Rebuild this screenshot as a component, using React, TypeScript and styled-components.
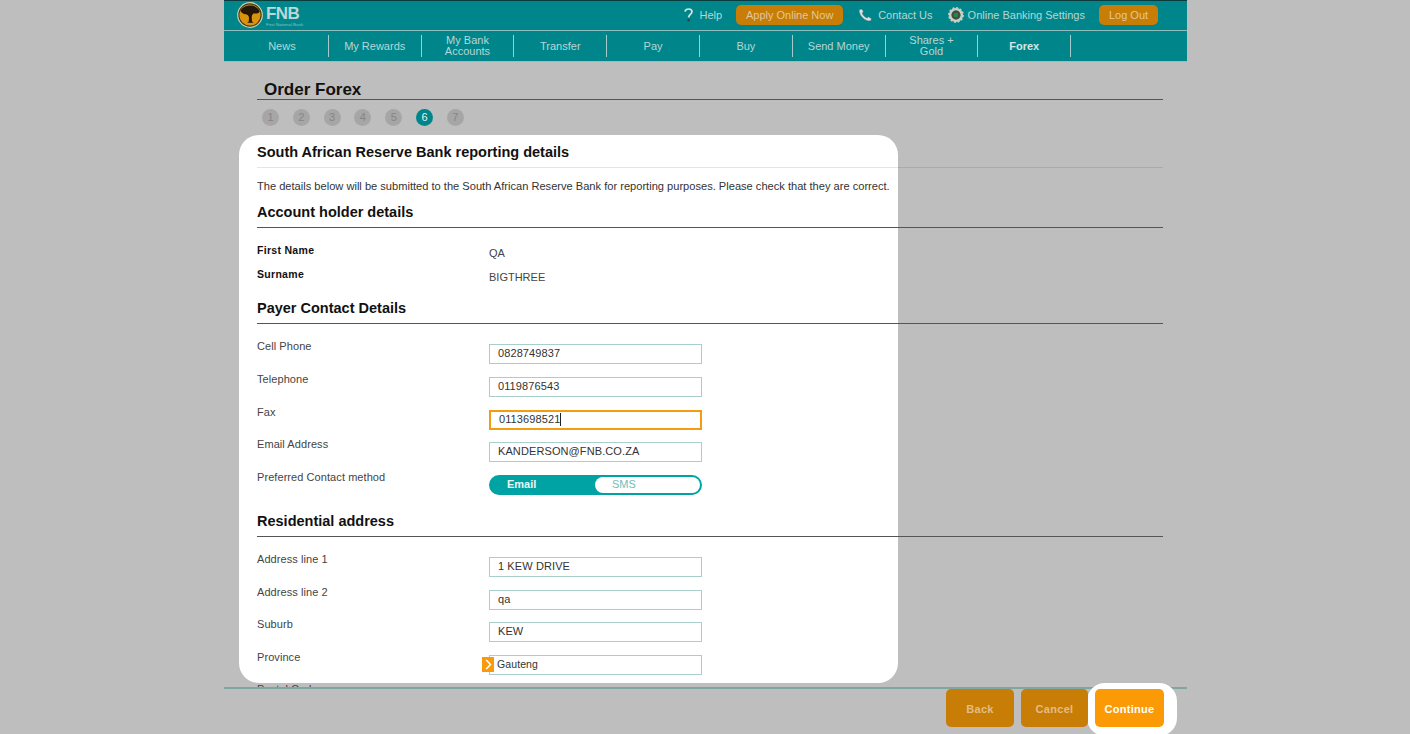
import React from 'react';
import styled, { createGlobalStyle } from 'styled-components';

const GlobalStyle = createGlobalStyle`
  html, body {
    margin: 0;
    padding: 0;
    height: 100%;
    background: #bebebe;
    font-family: "Liberation Sans", Arial, sans-serif;
    overflow: hidden;
  }
`;

const Page = styled.div`
  width: 963px;
  height: 734px;
  margin-left: 224px;
  display: flex;
  flex-direction: column;
  overflow: hidden;
`;

const TopBar = styled.div`
  height: 28px;
  flex: none;
  background: #00868a;
  border-top: 1px solid #0b3a3c;
  border-bottom: 1px solid #8ebdbd;
  display: flex;
  align-items: center;
  padding: 0 29px 1px 13px;
  color: #b6d6d6;
  font-size: 11px;
`;

const Logo = styled.div`
  display: flex;
  align-items: center;
  gap: 3px;
`;

const LogoText = styled.div`
  display: flex;
  flex-direction: column;
  margin-top: 3px;
`;

const LogoWord = styled.div`
  color: #b9d8d8;
  font-size: 17px;
  font-weight: bold;
  letter-spacing: -0.6px;
  line-height: 16px;
`;

const LogoTag = styled.div`
  color: #8fc2c2;
  font-size: 4.4px;
  line-height: 5px;
  white-space: nowrap;
`;

const TopLinks = styled.div`
  margin-left: auto;
  display: flex;
  align-items: center;
`;

const TopLink = styled.span<{ $gap?: number; $iconGap?: number }>`
  display: flex;
  align-items: center;
  gap: ${(p) => p.$iconGap ?? 5}px;
  margin-left: ${(p) => p.$gap ?? 0}px;
`;

const OrangeButton = styled.span<{ $gap: number; $width: number }>`
  margin-left: ${(p) => p.$gap}px;
  width: ${(p) => p.$width}px;
  height: 20px;
  border-radius: 5px;
  background: #c77d06;
  color: #e3c79a;
  display: flex;
  align-items: center;
  justify-content: center;
`;

const NavBar = styled.div`
  height: 30px;
  flex: none;
  background: #00868a;
  display: flex;
  align-items: center;
  padding-left: 12px;
  border-bottom: 1px solid #aab4b4;
`;

const NavItem = styled.div<{ $active?: boolean }>`
  width: 92.8px;
  height: 22px;
  flex: none;
  padding: 0 12px;
  display: flex;
  align-items: center;
  justify-content: center;
  text-align: center;
  line-height: 11px;
  font-size: 11px;
  color: ${(p) => (p.$active ? '#d5e6e6' : '#b6d6d6')};
  font-weight: ${(p) => (p.$active ? 'bold' : 'normal')};
  border-right: 1px solid #a5cccc;
  box-sizing: border-box;
`;

const Content = styled.div`
  position: relative;
  flex: 1;
  min-height: 0;
  overflow: hidden;
  padding: 0 24px 0 33px;
`;

// white spotlight of the tutorial overlay, sits behind the form
const Spotlight = styled.div`
  position: absolute;
  left: 15px;
  top: 73px;
  width: 659px;
  height: 548px;
  background: #fff;
  border-radius: 20px;
`;

const Form = styled.div`
  position: relative;
`;

const PageTitle = styled.h1`
  margin: 17px 0 0;
  padding: 0 0 0 7px;
  height: 20px;
  line-height: 22px;
  font-size: 17px;
  font-weight: bold;
  color: #111;
  border-bottom: 1px solid #555;
`;

const Steps = styled.div`
  display: flex;
  gap: 13.8px;
  margin: 9px 0 0 5px;
`;

const Step = styled.div<{ $active?: boolean }>`
  width: 17px;
  height: 17px;
  border-radius: 50%;
  background: ${(p) => (p.$active ? '#00868a' : '#a6a6a6')};
  color: ${(p) => (p.$active ? '#e4f0f0' : '#858585')};
  font-size: 11px;
  line-height: 17px;
  text-align: center;
`;

const PanelTitle = styled.h2`
  margin: 17px 0 0;
  height: 24px;
  line-height: 18px;
  font-size: 14.5px;
  font-weight: bold;
  color: #111;
  border-bottom: 1px solid rgba(0, 0, 0, 0.1);
`;

const Intro = styled.p`
  margin: 12px 0 0;
  height: 13px;
  line-height: 13px;
  font-size: 11.1px;
  color: #333;
  white-space: nowrap;
`;

const SectionTitle = styled.h3<{ $top: number }>`
  margin: ${(p) => p.$top}px 0 0;
  height: 24px;
  line-height: 18px;
  font-size: 14.5px;
  font-weight: bold;
  color: #111;
  border-bottom: 1px solid #555;
`;

const Rows = styled.div<{ $top: number; $gap: number }>`
  margin-top: ${(p) => p.$top}px;
  display: grid;
  grid-template-columns: 232px 213px;
  row-gap: ${(p) => p.$gap}px;
`;

const Label = styled.div<{ $bold?: boolean }>`
  font-size: ${(p) => (p.$bold ? 10.5 : 11)}px;
  line-height: 13px;
  color: ${(p) => (p.$bold ? '#111' : '#444')};
  font-weight: ${(p) => (p.$bold ? 'bold' : 'normal')};
  letter-spacing: ${(p) => (p.$bold ? '0.3px' : '0.07px')};
  margin-top: -4px;
`;

const Value = styled.div`
  font-size: 11px;
  line-height: 13px;
  color: #444;
  height: 12px;
  margin-top: -1px;
`;

const Field = styled.div<{ $focused?: boolean }>`
  box-sizing: border-box;
  height: 20px;
  position: relative;
  border: ${(p) => (p.$focused ? '2px solid #f39c12' : '1px solid #a9cfcb')};
  padding-left: 8px;
  font-size: 11px;
  line-height: ${(p) => (p.$focused ? '15px' : '17px')};
  color: #333;
  letter-spacing: 0.1px;
  background: #fff;
`;

const Caret = styled.span`
  display: inline-block;
  width: 1px;
  height: 13px;
  background: #222;
  vertical-align: -3px;
`;

const SelectField = styled(Field)`
  padding-left: 7px;
  font-size: 10.5px;
`;

const SelectArrow = styled.span`
  position: absolute;
  left: -8px;
  top: 1px;
  width: 12px;
  height: 15px;
  background: #f89a0c;
  display: flex;
  align-items: center;
  justify-content: center;
`;

const Toggle = styled.div`
  box-sizing: border-box;
  height: 20px;
  border: 2px solid #00a3a4;
  border-radius: 10px;
  background: #00a3a4;
  display: flex;
  font-size: 11px;
  line-height: 15px;
`;

const ToggleOn = styled.div`
  width: 104px;
  color: #e8f6f6;
  font-weight: bold;
  padding-left: 16px;
  box-sizing: border-box;
`;

const ToggleOff = styled.div`
  flex: 1;
  background: #fff;
  border-radius: 8px;
  color: #6fbdbd;
  padding-left: 17px;
`;

const Footer = styled.div`
  position: relative;
  height: 47px;
  flex: none;
  box-sizing: border-box;
  border-top: 2px solid #7ea79f;
  display: flex;
  justify-content: flex-end;
  gap: 7px;
  padding: 0 23px 0 0;
`;

const Halo = styled.div`
  position: absolute;
  left: 863px;
  top: -6px;
  width: 90px;
  height: 53px;
  background: #fff;
  border-radius: 18px;
`;

const FooterButton = styled.div<{ $width: number; $primary?: boolean }>`
  position: relative;
  width: ${(p) => p.$width}px;
  height: 38px;
  box-sizing: border-box;
  padding-top: 2px;
  border-radius: 5px;
  background: ${(p) => (p.$primary ? '#fb9a05' : '#c77d06')};
  color: ${(p) => (p.$primary ? '#fff' : '#e3bd83')};
  font-size: 11px;
  font-weight: bold;
  letter-spacing: 0.3px;
  display: flex;
  align-items: center;
  justify-content: center;
`;

const TreeLogo = () => (
  <svg width="26" height="26" viewBox="0 0 26 26">
    <circle cx="13" cy="13" r="12.3" fill="#4a3413" stroke="#c4d2b4" strokeWidth="1.2" />
    <circle cx="13" cy="13" r="10.6" fill="#d8930f" />
    <path d="M3.4 8.8C5.5 5 9 3.6 13 3.6C17 3.6 20.6 5 22.8 9.4C21.6 11.6 18.8 11.8 16.4 11.4C15.4 12.4 14.9 13.4 14.7 15.2L15 19.4L16.6 20.8H10.2L11.8 19.4L12 15.6C11.6 13.6 10.6 12.6 9 12.2C7 12.4 4.6 11 3.4 8.8Z" fill="#241708" />
  </svg>
);

const HelpIcon = () => (
  <svg width="9" height="14" viewBox="0 0 9 14">
    <path d="M1 3.6C1.4 1.8 3 1 4.6 1C6.6 1 8 2.2 8 3.8C8 6 5 6.2 4.6 9.4" fill="none" stroke="#d5e4e4" strokeWidth="1.7" />
    <circle cx="4.6" cy="12.2" r="1.2" fill="#3b3b3b" />
  </svg>
);

const PhoneIcon = () => (
  <svg width="15" height="14" viewBox="0 0 15 14">
    <path d="M1.5 1.5L4 1L5.5 3.8L4.2 5C5 7.2 6.6 9 9 10L10.4 8.8L13.5 10.6L13 12.4C12.4 13 11 13.2 9.5 12.8C5.5 11.6 2.2 8 1.2 4C1 3 1 2.2 1.5 1.5Z" fill="#d0e2e2" stroke="#4b5d5d" strokeWidth="0.5" />
  </svg>
);

const GearIcon = () => (
  <svg width="16" height="16" viewBox="0 0 16 16">
    <circle cx="8" cy="8" r="5.8" fill="none" stroke="#c9cfc6" strokeWidth="2.6" />
    <circle cx="8" cy="8" r="6.9" fill="none" stroke="#c9cfc6" strokeWidth="2" strokeDasharray="2 1.6" />
    <circle cx="8" cy="8" r="4.4" fill="#4b4a3c" />
    <circle cx="8" cy="8" r="2.3" fill="#1f8a4d" />
  </svg>
);

const ChevronIcon = () => (
  <svg width="7" height="11" viewBox="0 0 7 11">
    <path d="M1.2 1L5.5 5.5L1.2 10" fill="none" stroke="#fff" strokeWidth="1.5" />
  </svg>
);

const navItems = ['News', 'My Rewards', 'My Bank Accounts', 'Transfer', 'Pay', 'Buy', 'Send Money', 'Shares + Gold', 'Forex'];

const contactRows = [
  ['Cell Phone', '0828749837'],
  ['Telephone', '0119876543'],
];

const addressRows = [
  ['Address line 1', '1 KEW DRIVE'],
  ['Address line 2', 'qa'],
  ['Suburb', 'KEW'],
];

const App = () => {
  return (
    <Page>
      <GlobalStyle />
      <TopBar>
        <Logo>
          <TreeLogo />
          <LogoText>
            <LogoWord>FNB</LogoWord>
            <LogoTag>First National Bank</LogoTag>
          </LogoText>
        </Logo>
        <TopLinks>
          <TopLink $iconGap={7}><HelpIcon />Help</TopLink>
          <OrangeButton $gap={14} $width={107}>Apply Online Now</OrangeButton>
          <TopLink $gap={15}><PhoneIcon />Contact Us</TopLink>
          <TopLink $gap={15} $iconGap={4}><GearIcon />Online Banking Settings</TopLink>
          <OrangeButton $gap={14} $width={59}>Log Out</OrangeButton>
        </TopLinks>
      </TopBar>
      <NavBar>
        {navItems.map((item) => (
          <NavItem key={item} $active={item === 'Forex'}>{item}</NavItem>
        ))}
      </NavBar>
      <Content>
        <Spotlight />
        <Form>
          <PageTitle>Order Forex</PageTitle>
          <Steps>
            {[1, 2, 3, 4, 5, 6, 7].map((n) => (
              <Step key={n} $active={n === 6}>{n}</Step>
            ))}
          </Steps>
          <PanelTitle>South African Reserve Bank reporting details</PanelTitle>
          <Intro>The details below will be submitted to the South African Reserve Bank for reporting purposes. Please check that they are correct.</Intro>
          <SectionTitle $top={10}>Account holder details</SectionTitle>
          <Rows $top={20} $gap={13}>
            <Label $bold>First Name</Label>
            <Value>QA</Value>
            <Label $bold>Surname</Label>
            <Value>BIGTHREE</Value>
          </Rows>
          <SectionTitle $top={16}>Payer Contact Details</SectionTitle>
          <Rows $top={20} $gap={12.75}>
            {contactRows.map(([label, value]) => (
              <React.Fragment key={label}>
                <Label>{label}</Label>
                <Field>{value}</Field>
              </React.Fragment>
            ))}
            <Label>Fax</Label>
            <Field $focused>0113698521<Caret /></Field>
            <Label>Email Address</Label>
            <Field>KANDERSON@FNB.CO.ZA</Field>
            <Label>Preferred Contact method</Label>
            <Toggle>
              <ToggleOn>Email</ToggleOn>
              <ToggleOff>SMS</ToggleOff>
            </Toggle>
          </Rows>
          <SectionTitle $top={17}>Residential address</SectionTitle>
          <Rows $top={20} $gap={12.5}>
            {addressRows.map(([label, value]) => (
              <React.Fragment key={label}>
                <Label>{label}</Label>
                <Field>{value}</Field>
              </React.Fragment>
            ))}
            <Label>Province</Label>
            <SelectField>
              <SelectArrow><ChevronIcon /></SelectArrow>
              Gauteng
            </SelectField>
            <Label>Postal Code</Label>
          </Rows>
        </Form>
      </Content>
      <Footer>
        <Halo />
        <FooterButton $width={68}>Back</FooterButton>
        <FooterButton $width={67}>Cancel</FooterButton>
        <FooterButton $width={69} $primary>Continue</FooterButton>
      </Footer>
    </Page>
  );
};

export default App;
